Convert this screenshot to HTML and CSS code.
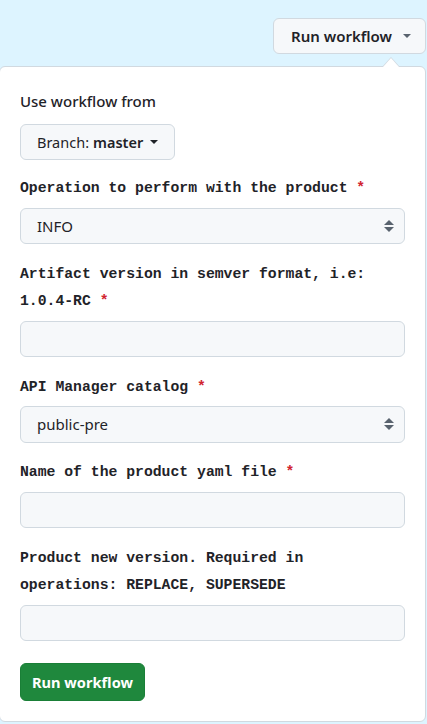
FILE: index.html
```html
<!DOCTYPE html>
<html>
<head>
<meta charset="utf-8">
<link rel="stylesheet" href="styles.css">
</head>
<body>
<div class="topbar">
  <button class="btn-top">Run workflow <span class="caret"></span></button>
</div>
<div class="popup">
  <div class="popup-arrow"></div>
  <div class="heading">Use workflow from</div>
  <button class="btn-branch">Branch: <b>master</b> <span class="caret"></span></button>
  <div class="fields">
    <div class="field">
      <label class="lbl">Operation to perform with the product <span class="req">*</span></label>
      <div class="select"><span>INFO</span>
        <svg class="updown" width="10" height="12" viewBox="0 0 10 12"><path d="M5 0 L10 5 H0 Z" fill="#59636e"/><path d="M0 7 H10 L5 12 Z" fill="#59636e"/></svg>
      </div>
    </div>
    <div class="field">
      <label class="lbl">Artifact version in semver format, i.e: 1.0.4-RC <span class="req">*</span></label>
      <div class="input"></div>
    </div>
    <div class="field">
      <label class="lbl">API Manager catalog <span class="req">*</span></label>
      <div class="select"><span>public-pre</span>
        <svg class="updown" width="10" height="12" viewBox="0 0 10 12"><path d="M5 0 L10 5 H0 Z" fill="#59636e"/><path d="M0 7 H10 L5 12 Z" fill="#59636e"/></svg>
      </div>
    </div>
    <div class="field">
      <label class="lbl">Name of the product yaml file <span class="req">*</span></label>
      <div class="input"></div>
    </div>
    <div class="field">
      <label class="lbl">Product new version. Required in operations: REPLACE, SUPERSEDE</label>
      <div class="input"></div>
    </div>
  </div>
  <button class="btn-run">Run workflow</button>
</div>
</body>
</html>
```

FILE: styles.css
```css
* { box-sizing: border-box; }
html, body { margin: 0; padding: 0; }
body {
  background: #ddf4ff;
  font-family: "Noto Sans", "Liberation Sans", sans-serif;
  color: #1f2328;
  width: 427px;
  height: 724px;
  overflow: hidden;
}
.topbar {
  height: 66px;
  display: flex;
  justify-content: flex-end;
  align-items: flex-start;
  padding-top: 18px;
  padding-right: 1px;
}
button { font-family: inherit; color: #1f2328; cursor: pointer; }
.btn-top {
  height: 36px;
  width: 153px;
  border: 1px solid #d1d9e0;
  background: #f6f8fa;
  border-radius: 6px;
  font-size: 15px;
  font-weight: 600;
  display: flex;
  align-items: center;
  justify-content: flex-start;
  gap: 11px;
  padding: 0 0 0 17px;
}
.caret {
  display: inline-block;
  width: 0; height: 0;
  border-left: 4px solid transparent;
  border-right: 4px solid transparent;
  border-top: 4px solid #59636e;
}
.popup {
  position: relative;
  margin-left: -1px;
  width: 427px;
  background: #fff;
  border: 1px solid #d1d9e0;
  border-radius: 6px;
  padding: 24px 20px 20px 20px;
}
.popup-arrow {
  position: absolute;
  top: -10px;
  left: 382px;
  width: 0; height: 0;
  border-left: 9px solid transparent;
  border-right: 9px solid transparent;
  border-bottom: 10px solid #d1d9e0;
}
.popup-arrow::after {
  content: "";
  position: absolute;
  left: -8px;
  top: 1px;
  border-left: 8px solid transparent;
  border-right: 8px solid transparent;
  border-bottom: 9px solid #fff;
}
.heading {
  font-size: 15px;
  font-weight: 500;
  line-height: 20px;
  margin-bottom: 13px;
}
.btn-branch {
  height: 36px;
  width: 155px;
  border: 1px solid #d1d9e0;
  background: #f6f8fa;
  border-radius: 6px;
  font-size: 14.5px;
  display: flex;
  align-items: center;
  gap: 6px;
  padding: 0 0 0 16px;
}
.btn-branch b { font-weight: 600; margin-left: -2px; }
.btn-branch .caret { margin-left: 1px; border-top-color: #1f2328; }
.fields {
  display: flex;
  flex-direction: column;
  gap: 14.5px;
  padding-top: 13px;
}
.lbl {
  display: block;
  font-family: "Liberation Mono", monospace;
  font-weight: 700;
  font-size: 14.75px;
  line-height: 27.5px;
  padding-top: 2px;
  margin-bottom: 5px;
}
.req { color: #d1242f; }
.select, .input {
  height: 36.5px;
  width: 100%;
  background: #f6f8fa;
  border: 1px solid #d1d9e0;
  border-radius: 6px;
}
.select {
  display: flex;
  align-items: center;
  justify-content: space-between;
  padding: 0 10px 0 16px;
  font-size: 15px;
}
.btn-run {
  margin-top: 21.5px;
  height: 38px;
  width: 125px;
  border: 1px solid #1a7f37;
  background: #1f883d;
  color: #fff;
  border-radius: 6px;
  font-size: 14.6px;
  font-weight: 700;
  padding: 0;
}
```
